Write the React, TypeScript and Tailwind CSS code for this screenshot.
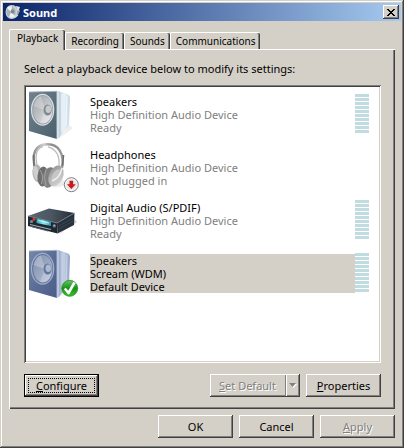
import { useState } from "react";
import type { ReactNode } from "react";
import clsx from "clsx";

type IconKind = "speaker" | "speaker-blue" | "headphones" | "receiver";

interface Device {
  id: number;
  name: string;
  driver: string;
  status: string;
  icon: IconKind;
  badge?: "default" | "unplugged";
  meter: boolean;
}

const devices: Device[] = [
  {
    id: 1,
    name: "Speakers",
    driver: "High Definition Audio Device",
    status: "Ready",
    icon: "speaker",
    meter: true,
  },
  {
    id: 2,
    name: "Headphones",
    driver: "High Definition Audio Device",
    status: "Not plugged in",
    icon: "headphones",
    badge: "unplugged",
    meter: false,
  },
  {
    id: 3,
    name: "Digital Audio (S/PDIF)",
    driver: "High Definition Audio Device",
    status: "Ready",
    icon: "receiver",
    meter: true,
  },
  {
    id: 4,
    name: "Speakers",
    driver: "Scream (WDM)",
    status: "Default Device",
    icon: "speaker-blue",
    badge: "default",
    meter: true,
  },
];

const tabs = ["Playback", "Recording", "Sounds", "Communications"];

const raised =
  "bg-[#d4d0c8] shadow-[inset_-1px_-1px_#404040,inset_1px_1px_#ffffff,inset_-2px_-2px_#808080]";

function Speaker({ blue }: { blue: boolean }) {
  const id = blue ? "blue" : "gray";
  return (
    <>
      <defs>
        <linearGradient id={`face-${id}`} x1="0" y1="0" x2="1" y2="1">
          <stop offset="0" stopColor={blue ? "#7587ab" : "#72838e"} />
          <stop offset="0.5" stopColor={blue ? "#5a6d95" : "#5c707d"} />
          <stop offset="1" stopColor={blue ? "#4c5e88" : "#4b5f6c"} />
        </linearGradient>
        <linearGradient id={`side-${id}`} x1="0" y1="0" x2="1" y2="0">
          <stop offset="0" stopColor={blue ? "#93a5c6" : "#aec7d8"} />
          <stop offset="0.5" stopColor={blue ? "#c3cfe4" : "#e9f3f9"} />
          <stop offset="1" stopColor={blue ? "#8fa2c4" : "#c4d8e4"} />
        </linearGradient>
        <linearGradient id={`cone-${id}`} x1="0" y1="0" x2="1" y2="1">
          <stop offset="0" stopColor={blue ? "#7f8ca8" : "#9ba1a6"} />
          <stop offset="0.5" stopColor={blue ? "#9aa7c1" : "#c0c4c8"} />
          <stop offset="1" stopColor={blue ? "#b9c3d9" : "#e8eaec"} />
        </linearGradient>
      </defs>
      <path d="M32 50 L45 40 L41 37 Z" fill="#eeeeee" />
      <path d="M30 3 L39 6 Q42 7 42 10 L41 36 Q41 38 39 40 L31 50 Z" fill={`url(#side-${id})`} />
      <path
        d="M34 6 L34 44 M39 8 L38 38"
        stroke="#ffffff"
        strokeOpacity={blue ? "0.35" : "0.7"}
        fill="none"
      />
      <path d="M1 4 L29 3.3 L29 51 L1 43 Z" fill={`url(#face-${id})`} />
      <path d="M28.6 3.2 L31 3.2 L31 50 L28.6 51 Z" fill={blue ? "#b7c5de" : "#d6e0e7"} />
      <path d="M1 4 L29 3.3" stroke={blue ? "#a9b6cf" : "#aab7c0"} strokeWidth="0.8" />
      <ellipse cx="14.6" cy="21.8" rx="11.7" ry="16" fill={blue ? "#a3b0cc" : "#d9dfe3"} />
      <ellipse cx="14.6" cy="21.8" rx="10.5" ry="14.7" fill={blue ? "#62739a" : "#9aa3a9"} />
      <ellipse cx="14.8" cy="21.8" rx="9.7" ry="13.7" fill={`url(#cone-${id})`} />
      <path d="M17 22 L5.5 18 Q8 10 13 8.3 Z" fill="#ffffff" fillOpacity="0.25" />
      <path d="M17 22 L12 35 Q19 37 23.5 28 Z" fill="#ffffff" fillOpacity="0.22" />
      <ellipse cx="19.6" cy="22" rx="4" ry="5.5" fill={blue ? "#64749a" : "#81888d"} />
      <ellipse cx="20.3" cy="21.2" rx="2.8" ry="3.8" fill={blue ? "#acb9d3" : "#c5cacd"} />
    </>
  );
}

function Headphones() {
  return (
    <>
      <defs>
        <linearGradient id="band" x1="0" y1="0" x2="1" y2="0">
          <stop offset="0" stopColor="#8c8c8c" />
          <stop offset="0.35" stopColor="#d0d0d0" />
          <stop offset="0.6" stopColor="#8a8a8a" />
          <stop offset="1" stopColor="#9a9a9a" />
        </linearGradient>
        <linearGradient id="cup" x1="0" y1="0" x2="1" y2="1">
          <stop offset="0" stopColor="#8f8f8f" />
          <stop offset="0.5" stopColor="#b6b6b6" />
          <stop offset="1" stopColor="#dcdcdc" />
        </linearGradient>
      </defs>
      <path d="M26 47 L39 44 L34 38 Z" fill="#ececec" />
      <path
        d="M7 27 C3.5 13 7 3.5 19 3.3 C31 3 36.5 13 34 27"
        fill="none"
        stroke="url(#band)"
        strokeWidth="2.4"
      />
      <path
        d="M9.5 26 C6.5 14 9 7 15 5.3 M31 25 C32 14 28 8 20 5.8"
        fill="none"
        stroke="#bdbdbd"
        strokeWidth="1.3"
      />
      <path d="M5.5 14 L6 25 M35.5 14 L34.5 25" stroke="#6f6f6f" strokeWidth="1.6" />
      <ellipse cx="9.5" cy="32.5" rx="5" ry="9" fill="#b4b4b4" transform="rotate(-8 9.5 32.5)" />
      <ellipse cx="8" cy="32" rx="2.5" ry="7" fill="#cfcfcf" transform="rotate(-8 8 32)" />
      <ellipse cx="15" cy="35.5" rx="5.5" ry="10" fill="#6d6d6d" transform="rotate(4 15 35.5)" />
      <ellipse cx="21" cy="36.5" rx="6.5" ry="10.5" fill="#7f7f7f" transform="rotate(14 21 36.5)" />
      <path d="M12 29 Q16 34 13.5 43 M18 28 Q15 36 18 45" stroke="#a2a2a2" fill="none" />
      <ellipse cx="28" cy="35" rx="7" ry="11" fill="url(#cup)" transform="rotate(22 28 35)" />
      <ellipse cx="28.5" cy="35.5" rx="4.5" ry="7.5" fill="#c6c6c6" transform="rotate(28 28.5 35.5)" />
      <path d="M24 40 Q32 37 34 27" stroke="#ededed" strokeWidth="1.5" fill="none" />
    </>
  );
}

function Receiver() {
  return (
    <>
      <defs>
        <linearGradient id="lid" x1="0" y1="0" x2="1" y2="0">
          <stop offset="0" stopColor="#5d6872" />
          <stop offset="0.5" stopColor="#4a5661" />
          <stop offset="1" stopColor="#242e38" />
        </linearGradient>
        <linearGradient id="lcd" x1="0" y1="0" x2="1" y2="0">
          <stop offset="0" stopColor="#2fa5b5" />
          <stop offset="0.5" stopColor="#8fe9ee" />
          <stop offset="1" stopColor="#2794ab" />
        </linearGradient>
      </defs>
      <path d="M31 40 L49 28 L46 25 Z" fill="#c9cccf" />
      <path d="M0 22 L21 14.5 L46.5 19 L29 29 Z" fill="url(#lid)" />
      <path d="M29 29 L46.5 19 L46 31 L29.5 39.5 Z" fill="#27323d" />
      <path d="M31 32 L45 24 M31 35 L45 27" stroke="#3c4a57" strokeWidth="0.8" />
      <path d="M0 22 L29 29 L29.5 39.5 L0 32 Z" fill="#1e2831" />
      <path d="M0 22 L29 29 L46.5 19" stroke="#75838f" strokeWidth="0.8" fill="none" />
      <path d="M8.5 24.5 L23 28 L23 32 L8.5 29 Z" fill="url(#lcd)" />
      <path d="M10.5 26.5 L21 29" stroke="#d8ffff" strokeWidth="0.8" />
      <path d="M2 30.5 L23 35.5" stroke="#a3adb5" strokeWidth="1.2" />
      <path d="M3 32.5 L20 37" stroke="#5b6670" />
      <circle cx="6" cy="25.2" r="1.5" fill="#e5382e" />
      <circle cx="3.5" cy="27.5" r="1.6" fill="#7c8993" />
      <circle cx="26.3" cy="32" r="1.8" fill="#596673" />
      <circle cx="26.3" cy="31.6" r="1" fill="#a3b0bb" />
    </>
  );
}

function DeviceIcon({ icon, badge }: { icon: IconKind; badge?: Device["badge"] }) {
  return (
    <svg className="size-13 shrink-0" viewBox="0 0 52 52" aria-hidden="true">
      {icon === "headphones" && <Headphones />}
      {icon === "receiver" && <Receiver />}
      {icon === "speaker" && <Speaker blue={false} />}
      {icon === "speaker-blue" && <Speaker blue />}
      {badge === "unplugged" && (
        <>
          <circle cx="43.3" cy="43.7" r="7" fill="#f8f8f8" stroke="#808080" strokeWidth="1" />
          <circle cx="43.3" cy="43.7" r="5.4" fill="#e6e6e6" />
          <path d="M41.5 39.7 h3.6 v3.5 h2.6 l-4.4 4.8 l-4.4 -4.8 h2.6 Z" fill="#d0151c" />
        </>
      )}
      {badge === "default" && (
        <>
          <defs>
            <linearGradient id="tick" x1="0" y1="0" x2="0" y2="1">
              <stop offset="0" stopColor="#6cc464" />
              <stop offset="0.5" stopColor="#129412" />
              <stop offset="1" stopColor="#3fc32f" />
            </linearGradient>
          </defs>
          <circle cx="41.7" cy="41.3" r="8" fill="url(#tick)" stroke="#2d8a2b" strokeWidth="0.8" />
          <path
            d="M36.8 41.5 L40.5 46 L46.5 35.5"
            fill="none"
            stroke="#ffffff"
            strokeWidth="2.6"
            strokeLinejoin="round"
          />
        </>
      )}
    </svg>
  );
}

function Meter() {
  return (
    <div className="mt-1.5 flex w-3.5 flex-col gap-px">
      {Array.from({ length: 10 }, (_, i) => (
        <div key={i} className="h-[3px] bg-[#c1dce1]" />
      ))}
    </div>
  );
}

interface DialogButtonProps {
  children: ReactNode;
  disabled?: boolean;
  onClick?: () => void;
}

function DialogButton({ children, disabled, onClick }: DialogButtonProps) {
  return (
    <button
      type="button"
      disabled={disabled}
      onClick={onClick}
      className={clsx(
        raised,
        "h-[23px] w-[75px] whitespace-nowrap",
        disabled && "text-[#808080] [text-shadow:1px_1px_#ffffff]"
      )}
    >
      {children}
    </button>
  );
}

export default function App() {
  const [activeTab, setActiveTab] = useState("Playback");
  const [selectedId, setSelectedId] = useState(4);

  return (
    <main className="flex min-h-screen w-full cursor-default flex-col bg-[#d4d0c8] p-[3px] font-['Noto_Sans','Open_Sans',sans-serif] text-[11px] leading-[13px] text-black shadow-[inset_-1px_-1px_#404040,inset_1px_1px_#d4d0c8,inset_-2px_-2px_#808080,inset_2px_2px_#ffffff] select-none">
      <header className="flex h-[18px] items-center gap-0.5 bg-linear-to-r/srgb from-[#0a246a] to-[#a6caf0] px-0.5">
        <svg className="size-4" viewBox="0 0 16 16" aria-hidden="true">
          <path d="M8 1 L13 3 L15 7 L12 13 L7 15 Z" fill="#8d999f" />
          <path d="M11 2 L15 3 L13 8 Z" fill="#dce4e8" />
          <ellipse cx="6.5" cy="8" rx="6" ry="7" fill="#c9d2d6" />
          <ellipse cx="6" cy="8" rx="4.6" ry="5.8" fill="#a7b2b8" />
          <path d="M6 8 L2 4 Q4 1.5 7 2.5 Z M6 8 L10 12 Q7 15 4 13 Z" fill="#eef2f4" />
          <circle cx="7.5" cy="7.5" r="2" fill="#7d898f" />
          <path d="M9 14 L13 11" stroke="#e4eaed" />
        </svg>
        <h1 className="flex-1 text-[11px] font-bold text-white">Sound</h1>
        <button
          type="button"
          aria-label="Close"
          className={clsx(raised, "flex h-3.5 w-4 items-center justify-center")}
        >
          <svg className="h-[7px] w-2" viewBox="0 0 8 7" shapeRendering="crispEdges">
            <path
              d="M0 0h2v1h1v1h2v-1h1v-1h2v1h-1v1h-1v1h-1v1h1v1h1v1h1v1h-2v-1h-1v-1h-2v1h-1v1h-2v-1h1v-1h1v-1h1v-1h-1v-1h-1v-1h-1z"
              fill="#000000"
            />
          </svg>
        </button>
      </header>

      <div className="flex flex-1 flex-col px-1.5 pt-2 pb-[7px]">
        <div role="tablist" className="flex items-end text-[10px]">
          {tabs.map((tab) => {
            const active = tab === activeTab;
            return (
              <button
                key={tab}
                type="button"
                role="tab"
                aria-selected={active}
                onClick={() => setActiveTab(tab)}
                className={clsx(
                  "relative rounded-t-xs border-t border-l border-white bg-[#d4d0c8] shadow-[inset_-1px_0_#404040,inset_-2px_0_#808080]",
                  active ? "z-10 -mb-px h-[21px] px-[7px] pb-1" : "h-[17px] px-[5px]"
                )}
              >
                {tab}
              </button>
            );
          })}
        </div>

        <section
          role="tabpanel"
          aria-label={activeTab}
          className="flex flex-1 flex-col border-t border-l border-white px-3.5 py-3 shadow-[inset_-1px_-1px_#404040,inset_-2px_-2px_#808080]"
        >
          <p className="mb-2.5">Select a playback device below to modify its settings:</p>

          <ul
            role="listbox"
            aria-label="Playback devices"
            className="flex-1 bg-white py-[3px] pr-3 pl-1 shadow-[inset_1px_1px_#808080,inset_-1px_-1px_#ffffff,inset_2px_2px_#404040,inset_-2px_-2px_#d4d0c8]"
          >
            {devices.map((device) => {
              const selected = device.id === selectedId;
              return (
                <li
                  key={device.id}
                  role="option"
                  aria-selected={selected}
                  onClick={() => setSelectedId(device.id)}
                  className="flex h-[53px] items-start"
                >
                  <DeviceIcon icon={device.icon} badge={device.badge} />
                  <div
                    className={clsx(
                      "mt-[7px] ml-2.5 flex-1",
                      selected ? "bg-[#d4d0c8]" : "text-[#808080]"
                    )}
                  >
                    <p className="text-black">{device.name}</p>
                    <p>{device.driver}</p>
                    <p>{device.status}</p>
                  </div>
                  {device.meter ? <Meter /> : <div className="w-3.5" />}
                </li>
              );
            })}
          </ul>

          <div className="mt-[11px] flex">
            <button
              type="button"
              className="h-[23px] w-[75px] border border-black bg-[#d4d0c8] p-[3px] shadow-[inset_-1px_-1px_#404040,inset_1px_1px_#ffffff,inset_-2px_-2px_#808080]"
            >
              <span className="flex h-full items-center justify-center border border-dotted border-black">
                <span>
                  <u>C</u>onfigure
                </span>
              </span>
            </button>
            <div className={clsx(raised, "mr-1.5 ml-auto flex h-[23px] w-[90px]")}>
              <button
                type="button"
                disabled
                className="flex-1 whitespace-nowrap text-[#808080] [text-shadow:1px_1px_#ffffff]"
              >
                <u>S</u>et Default
              </button>
              <button
                type="button"
                disabled
                aria-label="Set default options"
                className="my-px flex w-[15px] items-center justify-center border-l border-[#808080] shadow-[inset_1px_0_#ffffff]"
              >
                <svg className="h-[5px] w-2" viewBox="0 0 8 5">
                  <path d="M1 1h7l-3.5 4z" fill="#ffffff" />
                  <path d="M0 0h7l-3.5 4z" fill="#808080" />
                </svg>
              </button>
            </div>
            <DialogButton>
              <u>P</u>roperties
            </DialogButton>
          </div>
        </section>

        <footer className="mt-1.5 flex justify-end gap-1.5">
          <DialogButton>OK</DialogButton>
          <DialogButton>Cancel</DialogButton>
          <DialogButton disabled>
            <u>A</u>pply
          </DialogButton>
        </footer>
      </div>
    </main>
  );
}
